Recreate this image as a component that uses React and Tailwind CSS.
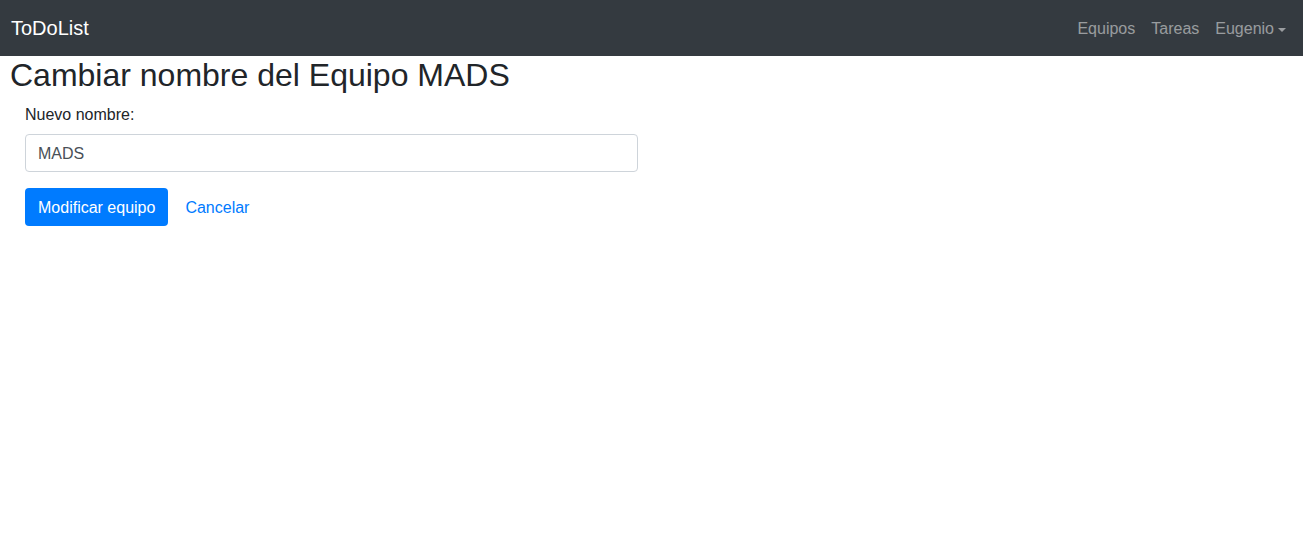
import React from 'react'

export default function App() {
  return (
    <div className="min-h-[535px] bg-white font-['Liberation_Sans',Arial,sans-serif] text-[16px] text-[#212529]">
      <nav className="flex h-14 items-center justify-between bg-[#343a40] pl-[11px] pr-[9px]">
        <a className="text-[20px] leading-[30px] text-white">ToDoList</a>
        <div className="flex items-center pt-[2px]">
          <a className="px-2 leading-6 text-white/50">Equipos</a>
          <a className="px-2 leading-6 text-white/50">Tareas</a>
          <a className="flex items-center px-2 leading-6 text-white/50">
            Eugenio
            <span className="ml-[4px] mt-[1px] inline-block h-0 w-0 border-x-[4.8px] border-t-[4.8px] border-x-transparent border-t-white/50" />
          </a>
        </div>
      </nav>

      <div className="pl-[10px]">
        <h2 className="mb-2 text-[32px] leading-[38px] font-normal">Cambiar nombre del Equipo MADS</h2>
        <form className="pl-[15px]">
          <div className="mb-4">
            <label className="mb-[7px] block pt-[1px] leading-6">Nuevo nombre:</label>
            <input
              defaultValue="MADS"
              className="block h-[38px] w-[613px] rounded border border-[#ced4da] px-3 pt-[7px] pb-[5px] leading-6 text-[#495057] outline-none"
            />
          </div>
          <div className="flex items-center gap-[5px]">
            <button type="button" className="h-[38px] rounded bg-[#007bff] px-[13px] pt-[1px] leading-6 text-white">
              Modificar equipo
            </button>
            <a className="px-3 pt-[1px] leading-6 text-[#007bff]">Cancelar</a>
          </div>
        </form>
      </div>
    </div>
  )
}
